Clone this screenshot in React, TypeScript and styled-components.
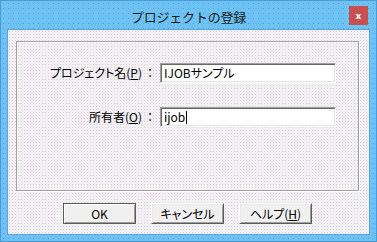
import React from "react";
import styled, { createGlobalStyle } from "styled-components";

const Global = createGlobalStyle`
  html, body { margin: 0; padding: 0; background: #ffffff; }
  body { font-family: "Noto Sans CJK JP", "Noto Sans", sans-serif; }
  *, *::before, *::after { box-sizing: border-box; }
`;

const Window = styled.div`
  width: 377px;
  height: 242px;
  border: 1px solid #4a9ad3;
  background-color: #6dc1f3;
  background-image: radial-gradient(circle, rgba(60, 130, 190, 0.45) 0.5px, transparent 0.9px);
  background-size: 5px 5px;
  display: flex;
  flex-direction: column;
  font-family: "Noto Sans CJK JP", "Noto Sans", sans-serif;
`;

const TitleBar = styled.div`
  position: relative;
  height: 28px;
  flex: none;
  display: flex;
  align-items: center;
  justify-content: center;
`;

const Title = styled.div`
  font-size: 13px;
  color: #1a1a1a;
  letter-spacing: -0.2px;
  margin-top: 2px;
`;

const CloseButton = styled.div`
  position: absolute;
  right: 8px;
  top: 5px;
  width: 19px;
  height: 19px;
  background: #c75050;
  color: #ffffff;
  font-family: "DejaVu Sans", sans-serif;
  font-weight: bold;
  font-size: 9px;
  display: flex;
  align-items: center;
  justify-content: center;
`;

const Client = styled.div`
  margin: 0 6px 6px 6px;
  flex: 1;
  border: 1px solid #5aa4da;
  background-color: #f2f0f3;
  background-image: radial-gradient(circle, rgba(205, 195, 210, 0.7) 0.5px, transparent 0.9px);
  background-size: 3px 3px;
  padding: 11px 10px 0 8px;
  display: flex;
  flex-direction: column;
`;

const GroupBox = styled.div`
  height: 150px;
  flex: none;
  border: 1px solid #a0a0a0;
  box-shadow: inset 1px 1px 0 #ffffff, 1px 1px 0 #ffffff;
  display: grid;
  grid-template-columns: 136px 176px;
  column-gap: 7px;
  row-gap: 24px;
  align-content: start;
  padding-top: 21px;
`;

const Label = styled.label`
  font-size: 12px;
  color: #000;
  font-feature-settings: "palt";
  text-align: right;
  line-height: 20px;
  white-space: nowrap;
  u { text-decoration: underline; text-underline-offset: 1px; }
`;

const Colon = styled.span`
  display: inline-block;
  margin-left: 5px;
`;

const Field = styled.div`
  height: 20px;
  background: #ffffff;
  border-top: 1px solid #a0a0a0;
  border-left: 1px solid #a0a0a0;
  border-bottom: 1px solid #ffffff;
  border-right: 1px solid #ffffff;
  box-shadow: inset 1px 1px 0 #696969, inset -1px -1px 0 #e3e3e3;
  padding: 0 3px;
  font-size: 12px;
  line-height: 18px;
  color: #000;
  font-feature-settings: "palt";
  display: flex;
  align-items: center;
`;

const Caret = styled.span`
  display: inline-block;
  width: 1px;
  height: 13px;
  background: #000;
  margin-left: 1px;
`;

const ButtonRow = styled.div`
  display: flex;
  justify-content: center;
  gap: 15px;
  margin-top: 12px;
`;

const Button = styled.div<{ $default?: boolean }>`
  width: 73px;
  height: 21px;
  background: #f0f0f0;
  border: 1px solid ${(p) => (p.$default ? "#5a5a5a" : "#ffffff")};
  border-right-color: #5a5a5a;
  border-bottom-color: #5a5a5a;
  box-shadow: ${(p) =>
    p.$default
      ? "inset 1px 1px 0 #ffffff, inset -1px -1px 0 #a0a0a0"
      : "inset 1px 1px 0 #e8e8e8, inset -1px -1px 0 #a0a0a0"};
  font-size: 12px;
  font-feature-settings: "palt";
  color: #000;
  display: flex;
  align-items: center;
  justify-content: center;
  u { text-decoration: underline; text-underline-offset: 1px; }
`;

export default function App() {
  return (
    <>
      <Global />
      <Window>
        <TitleBar>
          <Title>プロジェクトの登録</Title>
          <CloseButton>x</CloseButton>
        </TitleBar>
        <Client>
          <GroupBox>
            <Label>
              プロジェクト名(<u>P</u>)<Colon>：</Colon>
            </Label>
            <Field>IJOBサンプル</Field>
            <Label>
              所有者(<u>O</u>)<Colon>：</Colon>
            </Label>
            <Field>
              ijob<Caret />
            </Field>
          </GroupBox>
          <ButtonRow>
            <Button $default>OK</Button>
            <Button>キャンセル</Button>
            <Button>
              ヘルプ(<u>H</u>)
            </Button>
          </ButtonRow>
        </Client>
      </Window>
    </>
  );
}
